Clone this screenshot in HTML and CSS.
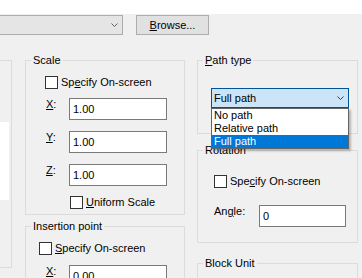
FILE: index.html
```html
<!DOCTYPE html>
<html lang="en">
<head>
    <meta charset="UTF-8">
    <meta name="viewport" content="width=device-width, initial-scale=1.0">
    <title>Insert Block</title>
    <link rel="stylesheet" href="styles.css">
</head>
<body>
    <div class="top-strip"></div>

    <div class="file-row">
        <div class="combo file-combo">
            <span></span>
            <svg class="chev" width="7" height="4" viewBox="0 0 7 4"><path d="M0.5 0.5 L3.5 3.5 L6.5 0.5" fill="none" stroke="#606060"/></svg>
        </div>
        <button class="btn"><u>B</u>rowse...</button>
    </div>

    <div class="columns">
        <!-- preview pane, mostly cut off on the left -->
        <div class="preview">
            <div class="preview-image"></div>
        </div>

        <div class="column">
            <fieldset class="group">
                <legend>Scale</legend>
                <div class="scale-body">
                    <label class="check"><input type="checkbox"><span>Sp<u>e</u>cify On-screen</span></label>
                    <div class="field first">
                        <label class="field-label"><u>X</u>:</label>
                        <input class="text-input" type="text" value="1.00">
                    </div>
                    <div class="field">
                        <label class="field-label"><u>Y</u>:</label>
                        <input class="text-input" type="text" value="1.00">
                    </div>
                    <div class="field">
                        <label class="field-label"><u>Z</u>:</label>
                        <input class="text-input" type="text" value="1.00">
                    </div>
                    <label class="check uniform"><input type="checkbox"><span><u>U</u>niform Scale</span></label>
                </div>
            </fieldset>

            <fieldset class="group insertion">
                <legend>Insertion point</legend>
                <div class="insertion-body">
                    <label class="check"><input type="checkbox"><span><u>S</u>pecify On-screen</span></label>
                    <div class="field insertion-field">
                        <label class="field-label"><u>X</u>:</label>
                        <input class="text-input" type="text" value="0.00">
                    </div>
                </div>
            </fieldset>
        </div>

        <div class="column">
            <fieldset class="group">
                <legend><u>P</u>ath type</legend>
                <div class="path-body">
                    <div class="combo-wrap">
                        <div class="combo path-combo">
                            <span>Full path</span>
                            <svg class="chev" width="7" height="4" viewBox="0 0 7 4"><path d="M0.5 0.5 L3.5 3.5 L6.5 0.5" fill="none" stroke="#404040"/></svg>
                        </div>
                        <ul class="dropdown">
                            <li class="option">No path</li>
                            <li class="option">Relative path</li>
                            <li class="option selected">Full path</li>
                        </ul>
                    </div>
                </div>
            </fieldset>

            <fieldset class="group rotation">
                <legend>Rotation</legend>
                <div class="rotation-body">
                    <label class="check"><input type="checkbox"><span>Spe<u>c</u>ify On-screen</span></label>
                    <div class="field angle-field">
                        <label class="field-label angle-label">An<u>g</u>le:</label>
                        <input class="text-input angle-input" type="text" value="0">
                    </div>
                </div>
            </fieldset>

            <fieldset class="group unit">
                <legend>Block Unit</legend>
                <div class="unit-body"></div>
            </fieldset>
        </div>
    </div>
</body>
</html>
```

FILE: styles.css
```css
html, body {
    overflow: hidden;
}
body {
    margin: 0;
    background-color: #f0f0f0;
    font-family: "Liberation Sans", Arial, sans-serif;
    font-size: 11px;
    line-height: 13px;
    color: #000;
}
u {
    text-decoration: underline;
}
.top-strip {
    height: 14px;
    background-color: #fff;
}
.file-row {
    display: flex;
    align-items: flex-start;
    gap: 13px;
    margin-top: 1px;
}
.combo {
    box-sizing: border-box;
    display: flex;
    align-items: center;
    justify-content: space-between;
    height: 20px;
    padding: 0 4px 0 2px;
    border: 1px solid #adadad;
    background-color: #e5e5e5;
}
.file-combo {
    width: 124px;
    margin-left: -1px;
}
.chev {
    display: block;
}
.btn {
    box-sizing: border-box;
    width: 73px;
    height: 20px;
    padding: 0;
    border: 1px solid #adadad;
    background-color: #e1e1e1;
    font: inherit;
    color: #000;
}
.columns {
    display: grid;
    grid-template-columns: 14px 160px 161px;
    column-gap: 12px;
    align-items: start;
    margin-top: 18px;
    margin-left: -1px;
}
.preview {
    box-sizing: border-box;
    width: 13px;
    height: 208px;
    margin-top: 7px;
    border: 1px solid #dcdcdc;
}
.preview-image {
    width: 9px;
    height: 78px;
    margin-top: 61px;
    background-color: #fff;
}
.group {
    margin: 0;
    padding: 0;
    min-width: 0;
    border: 1px solid #dcdcdc;
}
.group legend {
    margin-left: 5px;
    padding: 0 2px;
    line-height: 14px;
}
.check {
    display: flex;
    align-items: flex-start;
    gap: 3px;
    height: 13px;
}
.check input {
    appearance: none;
    box-sizing: border-box;
    width: 13px;
    height: 13px;
    margin: 0;
    border: 1px solid #333;
    background-color: #fff;
}
.field {
    display: flex;
    align-items: flex-start;
    margin-top: 11px;
}
.field.first {
    margin-top: 9px;
}
.field-label {
    box-sizing: border-box;
    width: 24px;
    padding-left: 1px;
}
.text-input {
    box-sizing: border-box;
    width: 98px;
    height: 22px;
    margin: 0;
    padding: 0 3px;
    border: 1px solid #7a7a7a;
    background-color: #fff;
    font: inherit;
    color: #000;
}
.scale-body {
    padding: 9px 0 5px 19px;
}
.uniform {
    margin-top: 10px;
    margin-left: 25px;
}
.insertion {
    margin-top: 4px;
}
.insertion-body {
    padding: 9px 0 20px 13px;
}
.insertion-field {
    margin-top: 10px;
    margin-left: 6px;
}
.path-body {
    padding: 21px 0 25px 13px;
}
.combo-wrap {
    position: relative;
    width: 138px;
}
.path-combo {
    border-color: #005499;
    background-color: #cce4f7;
}
.dropdown {
    position: absolute;
    top: 20px;
    left: 0;
    z-index: 1;
    box-sizing: border-box;
    width: 138px;
    height: 41px;
    margin: 0;
    padding: 0;
    list-style: none;
    border: 1px solid #646464;
    background-color: #fff;
    box-shadow: 2px 2px 2px rgba(0, 0, 0, 0.25);
}
.option {
    height: 13px;
    padding-left: 2px;
}
.option.selected {
    background-color: #0078d7;
    color: #fff;
}
.rotation {
    margin-top: 9px;
}
.rotation-body {
    padding: 18px 0 15px 16px;
}
.angle-field {
    margin-top: 17px;
}
.angle-label {
    width: 45px;
    padding-left: 0;
}
.angle-input {
    width: 87px;
}
.unit {
    margin-top: 13px;
}
.unit-body {
    height: 30px;
}
```
